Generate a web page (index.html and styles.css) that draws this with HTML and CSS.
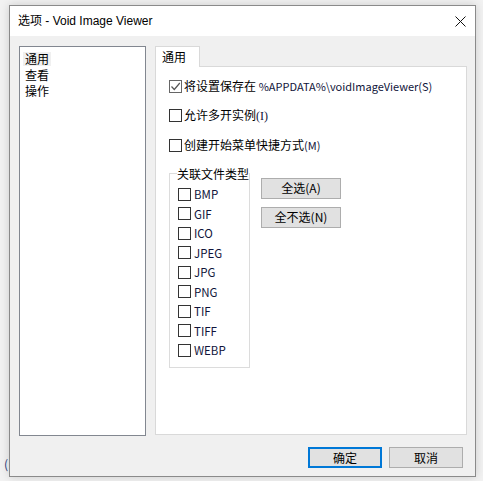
FILE: index.html
```html
<!DOCTYPE html>
<html lang="zh-CN">
<head>
<meta charset="utf-8">
<title>选项 - Void Image Viewer</title>
<link rel="stylesheet" href="styles.css">
</head>
<body>
<span class="stray">(</span>
<div class="window">
  <div class="titlebar">
    <span class="title">选项 - Void Image Viewer</span>
    <svg class="close" width="11" height="11" viewBox="0 0 11 11"><path d="M0.5 0.5 L10.5 10.5 M10.5 0.5 L0.5 10.5" stroke="#111" stroke-width="1" fill="none"/></svg>
  </div>
  <div class="client">
    <div class="main">
      <ul class="list">
        <li><span class="item sel">通用</span></li>
        <li><span class="item">查看</span></li>
        <li><span class="item">操作</span></li>
      </ul>
      <div class="tabs">
        <div class="tabstrip"><div class="tab">通用</div></div>
        <div class="panel">
          <div class="opt"><span class="box checked"><svg width="11" height="11" viewBox="0 0 11 11"><path d="M1.5 5.5 L4.3 8.5 L9.8 2" stroke="#555" stroke-width="1.2" fill="none"/></svg></span><span class="lbl">将设置保存在 <span class="lat">%APPDATA%\voidImageViewer(S)</span></span></div>
          <div class="opt"><span class="box"></span><span class="lbl">允许多开实例<span class="lat serif">(I)</span></span></div>
          <div class="opt"><span class="box"></span><span class="lbl">创建开始菜单快捷方式<span class="lat">(M)</span></span></div>
          <div class="assoc">
            <fieldset class="group">
              <legend>关联文件类型</legend>
              <div class="ft"><span class="box"></span><span class="lbl ext">BMP</span></div>
              <div class="ft"><span class="box"></span><span class="lbl ext">GIF</span></div>
              <div class="ft"><span class="box"></span><span class="lbl ext">ICO</span></div>
              <div class="ft"><span class="box"></span><span class="lbl ext">JPEG</span></div>
              <div class="ft"><span class="box"></span><span class="lbl ext">JPG</span></div>
              <div class="ft"><span class="box"></span><span class="lbl ext">PNG</span></div>
              <div class="ft"><span class="box"></span><span class="lbl ext">TIF</span></div>
              <div class="ft"><span class="box"></span><span class="lbl ext">TIFF</span></div>
              <div class="ft"><span class="box"></span><span class="lbl ext">WEBP</span></div>
            </fieldset>
            <div class="btncol">
              <button class="btn wide">全选(A)</button>
              <button class="btn wide">全不选(N)</button>
            </div>
          </div>
        </div>
      </div>
    </div>
    <div class="footer">
      <button class="btn default">确定</button>
      <button class="btn">取消</button>
    </div>
  </div>
</div>
</body>
</html>
```
FILE: styles.css
```css
html, body {
  margin: 0;
  padding: 0;
}
body {
  width: 483px;
  height: 481px;
  overflow: hidden;
  background: #f2f2f2;
  font-family: "Noto Sans CJK SC", "Liberation Sans", sans-serif;
  font-size: 12px;
  color: #000;
}
.stray {
  position: absolute;
  left: 4px;
  top: 457px;
  z-index: -1;
  font-size: 12px;
  line-height: 14px;
  color: #2a3a7a;
}
.window {
  margin: 5px 0 0 9px;
  width: 467px;
  height: 472px;
  box-sizing: border-box;
  border: 1px solid #8a8a8a;
  background: #f0f0f0;
  box-shadow: 0 0 9px rgba(0, 0, 0, 0.16);
  display: flex;
  flex-direction: column;
}
.titlebar {
  flex: none;
  height: 30px;
  background: #fff;
  display: flex;
  align-items: center;
  justify-content: space-between;
  padding: 0 9px 0 8px;
}
.title {
  font-family: "Liberation Sans", "Noto Sans CJK SC", sans-serif;
  font-size: 12px;
  line-height: 16px;
}
.close {
  display: block;
}
.client {
  flex: 1;
  padding: 10px 0 0 9px;
  display: flex;
  flex-direction: column;
}
.main {
  display: flex;
  gap: 9px;
}
.list {
  width: 127px;
  height: 390px;
  box-sizing: border-box;
  margin: 0;
  padding: 3px 0 0 3px;
  list-style: none;
  border: 1px solid #828790;
  background: #fff;
}
.list li {
  height: 16px;
}
.item {
  display: inline-block;
  line-height: 14px;
  padding: 0 2px;
}
.item.sel {
  background: #f0f0f0;
}
.tabs {
  width: 312px;
  display: flex;
  flex-direction: column;
}
.tabstrip {
  height: 20px;
  display: flex;
}
.tab {
  position: relative;
  z-index: 1;
  width: 45px;
  height: 21px;
  margin-bottom: -1px;
  box-sizing: border-box;
  border: 1px solid #d9d9d9;
  border-bottom: none;
  background: #fff;
  padding-left: 6px;
  line-height: 19px;
}
.panel {
  height: 369px;
  box-sizing: border-box;
  border: 1px solid #d9d9d9;
  background: #fff;
  padding: 12px 0 0 13px;
}
.opt {
  display: flex;
  align-items: center;
  height: 14px;
  gap: 2px;
  margin-bottom: 15.5px;
}
.box {
  flex: none;
  width: 13px;
  height: 13px;
  box-sizing: border-box;
  border: 1px solid #333;
  background: #fff;
  display: flex;
  align-items: center;
  justify-content: center;
}
.box.checked {
  border-color: #666;
}
.box svg {
  display: block;
}
.lbl {
  line-height: 14px;
  white-space: nowrap;
}
.lat {
  font-size: 11px;
  color: #10143a;
}
.lat.serif {
  font-family: "Liberation Serif", serif;
  font-size: 12px;
}
.ext {
  font-size: 11.5px;
  color: #10143a;
}
.assoc {
  display: flex;
  align-items: flex-start;
  gap: 11px;
  margin-top: -1px;
}
.group {
  width: 81px;
  height: 201px;
  min-width: 0;
  box-sizing: border-box;
  margin: 0;
  padding: 7px 0 0 8px;
  border: 1px solid #dcdcdc;
}
.group legend {
  padding: 0;
  margin-left: -1px;
  line-height: 14px;
  font-size: 12px;
  white-space: nowrap;
}
.ft {
  display: flex;
  align-items: center;
  height: 13px;
  gap: 3px;
  margin-bottom: 6.5px;
}
.btncol {
  display: flex;
  flex-direction: column;
  gap: 8px;
  margin-top: 11px;
}
.btn {
  font-family: "Noto Sans CJK SC", "Liberation Sans", sans-serif;
  font-size: 12px;
  line-height: 14px;
  color: #000;
  width: 74px;
  height: 21px;
  box-sizing: border-box;
  padding: 0;
  margin: 0;
  border: 1px solid #adadad;
  background: #e1e1e1;
  border-radius: 0;
}
.btn.wide {
  width: 80px;
}
.btn.default {
  border: 2px solid #0078d7;
}
.footer {
  display: flex;
  justify-content: flex-end;
  gap: 7px;
  margin-top: 11px;
  padding-right: 12px;
}
```
